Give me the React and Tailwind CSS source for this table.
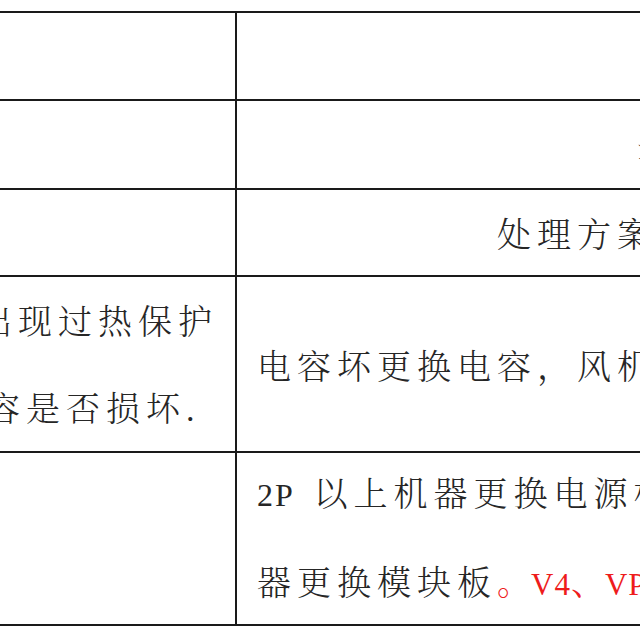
export default function App() {
  const latin = "font-['Liberation_Serif','Times_New_Roman',serif] font-normal";
  return (
    <div className="w-[640px] h-[640px] overflow-hidden bg-white pt-[11px] text-[#262626] text-[34px] font-light font-['Noto_Serif_CJK_SC','Noto_Sans_CJK_SC',sans-serif]">
      <div className="w-[900px] border-t-2 border-[#1a1a1a] flex flex-col">
        {/* row 1 */}
        <div className="flex h-[88px] border-b-2 border-[#1a1a1a]">
          <div className="w-[237px] shrink-0 border-r-2 border-[#1a1a1a]" />
          <div className="flex-1" />
        </div>
        {/* row 2 */}
        <div className="flex h-[89px] border-b-2 border-[#1a1a1a]">
          <div className="w-[237px] shrink-0 border-r-2 border-[#1a1a1a]" />
          <div className="flex-1 flex items-center pl-[400px] pt-[12px] whitespace-nowrap">
            <span className="tracking-[6px]">注意事项</span>
          </div>
        </div>
        {/* row 3 */}
        <div className="flex h-[87px] border-b-2 border-[#1a1a1a]">
          <div className="w-[237px] shrink-0 border-r-2 border-[#1a1a1a]" />
          <div className="flex-1 flex items-center pl-[260px] whitespace-nowrap">
            <span className="tracking-[6px]">处理方案</span>
          </div>
        </div>
        {/* row 4 */}
        <div className="flex h-[176px] border-b-2 border-[#1a1a1a]">
          <div className="w-[237px] shrink-0 border-r-2 border-[#1a1a1a] flex flex-col justify-center leading-[87px] whitespace-nowrap overflow-hidden">
            <div className="ml-[-22px] tracking-[6px]">出现过热保护</div>
            <div className="ml-[-14px]">
              <span className="tracking-[6px]">容是否损坏</span>
              <span className={latin}>.</span>
            </div>
          </div>
          <div className="flex-1 flex items-center pl-[20px] whitespace-nowrap">
            <span className="tracking-[6px]">电容坏更换电容，风机损坏更换风机</span>
          </div>
        </div>
        {/* row 5 */}
        <div className="flex h-[173px] border-b-2 border-[#1a1a1a]">
          <div className="w-[237px] shrink-0 border-r-2 border-[#1a1a1a]" />
          <div className="flex-1 flex flex-col justify-center pl-[20px] leading-[86px] whitespace-nowrap">
            <div>
              <span className={latin + " text-[32px] tracking-[2px]"}>2P </span>
              <span className="tracking-[6px] ml-[10px]">以上机器更换电源板</span>
            </div>
            <div>
              <span className="tracking-[6px]">器更换模块板</span>
              <span className="text-[#ee1c1c]">
                <span>。</span>
                <span className={latin + " text-[31px] tracking-[1px]"}>V4</span>
                <span>、</span>
                <span className={latin + " text-[31px] tracking-[1px]"}>VP</span>
              </span>
            </div>
          </div>
        </div>
      </div>
    </div>
  );
}
